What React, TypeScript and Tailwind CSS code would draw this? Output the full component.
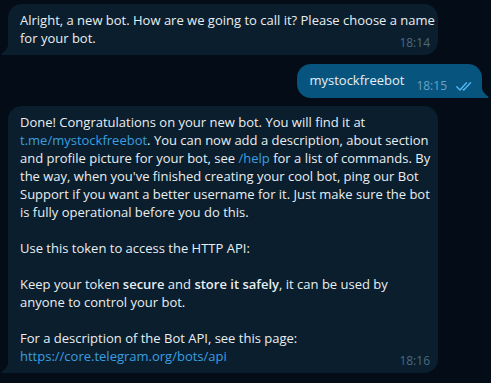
import React from "react";

const Tail = ({ side, color }: { side: "left" | "right"; color: string }) =>
  side === "left" ? (
    <svg
      className="absolute bottom-0 left-[-7px]"
      width="9"
      height="13"
      viewBox="0 0 9 13"
    >
      <path d="M9 0 V13 H2 C0.5 13 0 12 1.2 11.2 C5 8.5 7.5 5 7.5 0 Z" fill={color} />
    </svg>
  ) : (
    <svg
      className="absolute bottom-0 right-[-7px]"
      width="9"
      height="13"
      viewBox="0 0 9 13"
    >
      <path d="M0 0 V13 H7 C8.5 13 9 12 7.8 11.2 C4 8.5 1.5 5 1.5 0 Z" fill={color} />
    </svg>
  );

const Time = ({ t }: { t: string }) => (
  <span className="absolute right-[8px] bottom-[6px] text-[12px] leading-[12px] text-[#4c6a80]">
    {t}
  </span>
);

const A = ({ children }: { children: React.ReactNode }) => (
  <span className="text-[#3a9fe0]">{children}</span>
);

export default function App() {
  return (
    <div
      className="w-[491px] h-[383px] bg-[#030c17] flex flex-col pt-[4px] overflow-hidden text-[13px] leading-[18px] text-[#e9eef2]"
      style={{ fontFamily: "'Open Sans', 'Noto Sans', sans-serif" }}
    >
      {/* Bubble 1 */}
      <div className="relative ml-[8px] w-[430px] bg-[#0a1e2d] rounded-[14px] rounded-bl-none pl-[12px] pr-[12px] pt-[7px] pb-[8px]">
        <div className="whitespace-nowrap">
          Alright, a new bot. How are we going to call it? Please choose a name
          <br />
          for your bot.
        </div>
        <Time t="18:14" />
        <Tail side="left" color="#0a1e2d" />
      </div>

      {/* Bubble 2 */}
      <div className="self-end mr-[9px] mt-[9px] relative bg-[#07557f] rounded-[14px] rounded-br-none flex items-end pl-[12px] pr-[9px] pt-[7px] pb-[6px]">
        <span className="mb-[3px] whitespace-nowrap">mystockfreebot</span>
        <span className="ml-[12px] flex items-end">
          <span className="text-[12px] leading-[12px] text-[#6aa3c6]">18:15</span>
          <svg className="ml-[9px] mb-[1px]" width="17" height="9" viewBox="0 0 17 9">
            <path
              d="M0.8 4.8 L4 8 L10.5 0.8 M7.2 7.4 L7.8 8 L14.5 0.8"
              stroke="#52b6f0"
              strokeWidth="1.4"
              fill="none"
              strokeLinecap="round"
              strokeLinejoin="round"
            />
          </svg>
        </span>
        <Tail side="right" color="#07557f" />
      </div>

      {/* Bubble 3 */}
      <div className="relative ml-[8px] mt-[8px] w-[430px] bg-[#0a1e2d] rounded-[14px] rounded-bl-none pl-[12px] pr-[12px] pt-[7px] pb-[8px]">
        <div className="whitespace-nowrap">
          Done! Congratulations on your new bot. You will find it at
          <br />
          <A>t.me/mystockfreebot</A>. You can now add a description, about section
          <br />
          and profile picture for your bot, see <A>/help</A> for a list of commands. By
          <br />
          the way, when you've finished creating your cool bot, ping our Bot
          <br />
          Support if you want a better username for it. Just make sure the bot
          <br />
          is fully operational before you do this.
          <br />
          <br />
          Use this token to access the HTTP API:
          <br />
          <br />
          Keep your token <span className="font-semibold">secure</span> and{" "}
          <span className="font-semibold">store it safely</span>, it can be used by
          <br />
          anyone to control your bot.
          <br />
          <br />
          For a description of the Bot API, see this page:
          <br />
          <A>https://core.telegram.org/bots/api</A>
        </div>
        <Time t="18:16" />
        <Tail side="left" color="#0a1e2d" />
      </div>
    </div>
  );
}
